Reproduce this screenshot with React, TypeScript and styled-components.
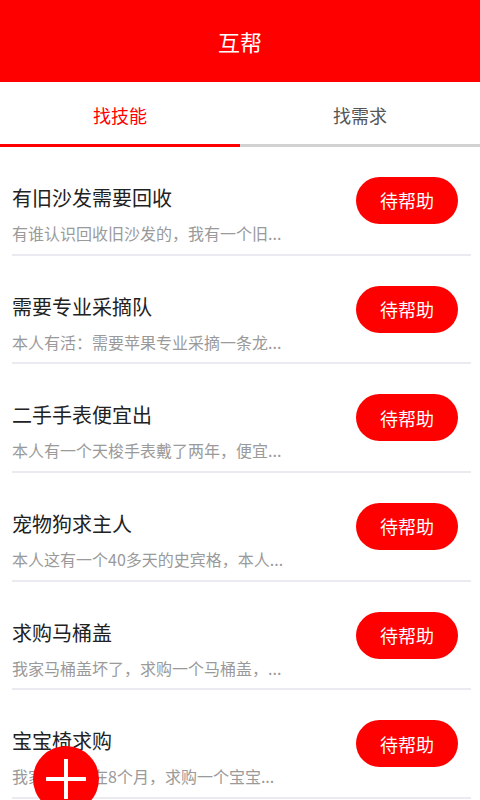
import styled, { createGlobalStyle } from 'styled-components';

const GlobalStyle = createGlobalStyle`
	html, body {
		margin: 0;
		padding: 0;
		background: #FFFFFF;
		font-family: "Noto Sans CJK SC", "Noto Sans", sans-serif;
	}
	#root {
		height: 800px;
		overflow: hidden;
	}
`

const Screen = styled.div`
	position: relative;
	display: flex;
	flex-direction: column;
	width: 480px;
	height: 800px;
	overflow: hidden;
	background: #FFFFFF;
`
const Header = styled.div`
	display: flex;
	align-items: center;
	justify-content: center;
	flex: none;
	height: 82px;
	background: #FF0000;
	color: #FFFFFF;
	font-size: 22px;
`
const TabBar = styled.div`
	display: flex;
	flex: none;
	height: 65px;
`
const Tab = styled.div<{ active: boolean }>`
	display: flex;
	flex: 1;
	align-items: center;
	justify-content: center;
	box-sizing: border-box;
	padding-top: 4px;
	font-size: 18px;
	color: ${({ active }) => active ? '#FF0000' : '#555555'};
	border-bottom: 3px solid ${({ active }) => active ? '#FF0000' : '#D2D2D2'};
`
const List = styled.div`
	display: flex;
	flex-direction: column;
	margin: 0 9px 0 12px;
`
const Row = styled.div`
	display: flex;
	align-items: center;
	justify-content: space-between;
	flex: none;
	box-sizing: border-box;
	height: 108.7px;
	border-bottom: 2px solid #EAEAF0;
`
const Texts = styled.div`
	display: flex;
	flex-direction: column;
	align-self: stretch;
	box-sizing: border-box;
	padding-top: 37px;
`
const Title = styled.div`
	font-size: 20px;
	line-height: 28px;
	color: #222222;
`
const Desc = styled.div`
	margin-top: 10px;
	font-size: 16px;
	line-height: 22px;
	color: #9A9A9A;
	white-space: nowrap;
`
const HelpButton = styled.button`
	flex: none;
	width: 102px;
	height: 47px;
	margin-right: 13px;
	border: none;
	border-radius: 24px;
	background: #FF0000;
	color: #FFFFFF;
	font-family: inherit;
	font-size: 18px;
	cursor: pointer;
`
const Fab = styled.button`
	position: absolute;
	left: 33px;
	top: 746px;
	display: flex;
	align-items: center;
	justify-content: center;
	width: 66px;
	height: 66px;
	padding: 0;
	border: none;
	border-radius: 50%;
	background: #FF0000;
	cursor: pointer;
`

const items = [
	{ title: '有旧沙发需要回收', desc: '有谁认识回收旧沙发的，我有一个旧...' },
	{ title: '需要专业采摘队', desc: '本人有活：需要苹果专业采摘一条龙...' },
	{ title: '二手手表便宜出', desc: '本人有一个天梭手表戴了两年，便宜...' },
	{ title: '宠物狗求主人', desc: '本人这有一个40多天的史宾格，本人...' },
	{ title: '求购马桶盖', desc: '我家马桶盖坏了，求购一个马桶盖，...' },
	{ title: '宝宝椅求购', desc: '我家宝宝现在8个月，求购一个宝宝...' },
];

const App = () => {
	return (
		<Screen>
			<GlobalStyle />
			<Header>互帮</Header>
			<TabBar>
				<Tab active={true}>找技能</Tab>
				<Tab active={false}>找需求</Tab>
			</TabBar>
			<List>
				{items.map((item) => (
					<Row key={item.title}>
						<Texts>
							<Title>{item.title}</Title>
							<Desc>{item.desc}</Desc>
						</Texts>
						<HelpButton>待帮助</HelpButton>
					</Row>
				))}
			</List>
			<Fab>
				<svg width="40" height="40" viewBox="0 0 40 40">
					<path d="M20 1 V39 M1 20 H39" stroke="#FFFFFF" strokeWidth="4" strokeLinecap="round" />
				</svg>
			</Fab>
		</Screen>
	);
}

export default App;
